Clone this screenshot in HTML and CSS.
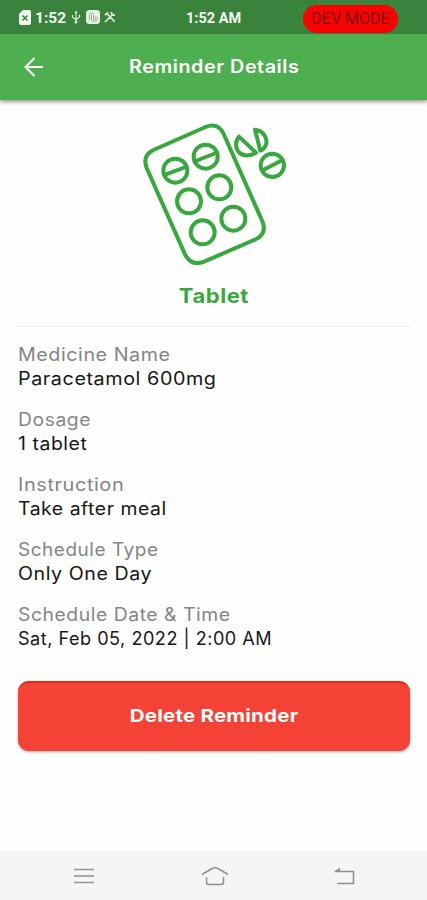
FILE: index.html
```html
<!DOCTYPE html>
<html lang="en">
<head>
<meta charset="utf-8">
<title>Reminder Details</title>
<link rel="stylesheet" href="styles.css">
</head>
<body>
<div class="screen">
  <div class="status">
    <div class="status-left">
      <svg width="12" height="15" viewBox="0 0 12 15"><path d="M4 0h6q2 0 2 2v11q0 2-2 2H2q-2 0-2-2V4z" fill="#f4fbf3"/><path d="M3.5 5.5l5 5m0-5l-5 5" stroke="#39833c" stroke-width="1.6"/></svg>
      <span class="clock">1:52</span>
      <svg class="usb" width="10" height="14" viewBox="0 0 10 14" fill="none" stroke="#d5e8d4" stroke-width="1.2"><path d="M5 2v10M1.500 5v2.500L5 9.500l3.500-2.500V4.500"/><path d="M3.300 3L5 .5 6.700 3z" fill="#d5e8d4" stroke="none"/><circle cx="5" cy="12" r="1.500" fill="#d5e8d4" stroke="none"/></svg>
      <svg class="app" width="14" height="14" viewBox="0 0 14 14"><rect width="14" height="14" rx="3.500" fill="#e8f3e7"/><path d="M3.500 10.500V5q0-2 2-2t2 2v2h2q2 0 2 2t-2 2h-4M5.500 5v5M7.500 7v3M9.500 8v2" fill="none" stroke="#8fb08f" stroke-width=".9"/></svg>
      <svg class="tools" width="12" height="12" viewBox="0 0 13 13" fill="none" stroke="#dcebdc" stroke-width="1.800"><path d="M1 12l9-9M3.500 3l8 8.500M1 4.500l3.500-3M8 1q0 4 4 3.500"/></svg>
    </div>
    <span class="time">1:52 AM</span>
    <span class="dev">DEV MODE</span>
  </div>
  <header class="appbar">
    <svg class="back" width="20" height="20" viewBox="0 0 20 20" fill="none" stroke="#fff" stroke-width="2.100"><path d="M10.500 1L1.500 10l9 9M1.500 10H19"/></svg>
    <h1 class="title">Reminder Details</h1>
  </header>
  <main class="content">
    <svg class="blister" width="170" height="160" viewBox="0 0 510 480" fill="none" stroke="#38a83e" stroke-width="12">
      <path d="M70 120L227 51Q264 36 281 72L398 336Q411 371 377 388L222 455Q185 470 166 435L50 174Q36 137 70 120Z"/>
      <circle cx="136" cy="182" r="36"/><circle cx="227" cy="140" r="36"/>
      <circle cx="177" cy="274" r="36"/><circle cx="268" cy="232" r="36"/>
      <circle cx="218" cy="367" r="36"/><circle cx="310" cy="326" r="36"/>
      <circle cx="427" cy="166" r="35"/>
      <path d="M106 194L167 171M197 153L258 129M398 181L456 151"/>
      <path d="M327 80C311 99 317 132 346 136Q362 138 378 128Z" stroke-linejoin="round"/>
      <path d="M375 59C402 61 416 89 406 108Q401 119 391 122Z" stroke-linejoin="round"/>
    </svg>
    <h2 class="kind"><span class="kind-text">Tablet</span></h2>
    <dl class="details">
      <div class="item"><dt class="l1">Medicine Name</dt><dd class="v1">Paracetamol 600mg</dd></div>
      <div class="item"><dt class="l2">Dosage</dt><dd class="v2">1 tablet</dd></div>
      <div class="item"><dt class="l3">Instruction</dt><dd class="v3">Take after meal</dd></div>
      <div class="item"><dt class="l4">Schedule Type</dt><dd class="v4">Only One Day</dd></div>
      <div class="item"><dt class="l5">Schedule Date &amp; Time</dt><dd class="v5">Sat, Feb 05, 2022 | 2:00 AM</dd></div>
    </dl>
    <button class="delete"><span class="delete-text">Delete Reminder</span></button>
  </main>
  <nav class="nav">
    <svg width="20" height="16" viewBox="0 0 20 16" fill="none" stroke="#929292" stroke-width="1.500"><path d="M0 1.500h20M0 8h20M0 14.500h20"/></svg>
    <svg width="28" height="20" viewBox="0 0 28 20" fill="none" stroke="#8f8f8f" stroke-width="1.500"><path d="M1 8.500L11 2.500Q14 1 17 2.500L27 8.500M5.500 11v5q0 2.500 2.500 2.500h12q2.500 0 2.500-2.500v-5"/></svg>
    <svg width="21" height="18" viewBox="0 0 21 18" fill="none" stroke="#8f8f8f" stroke-width="1.500"><path d="M1 4.500h18.500v12H3.500"/><path d="M0 4.800L6 .8v4z" fill="#8f8f8f" stroke="none"/></svg>
  </nav>
</div>
</body>
</html>
```
FILE: styles.css
```css
* { box-sizing: border-box; }
body { margin: 0; font-family: Inter, sans-serif; background: #fefefe; }
svg { display: block; flex: none; }
.screen { width: 427px; height: 900px; display: flex; flex-direction: column; }
.status { height: 34px; background: #39833c; display: grid; grid-template-columns: 186px 117px 95px; align-items: center; color: #f4fbf3; font-family: Roboto, sans-serif; }
.status-left { display: flex; align-items: center; padding-left: 19px; }
.clock { font-size: 15.5px; font-weight: 700; margin-left: 4px; width: 31px; padding-top: 1px; white-space: nowrap; }
.usb { margin-left: 5px; }
.app { margin: 0 4px 0 5px; }
.time { font-size: 14.5px; font-weight: 700; padding-top: 2px; white-space: nowrap; }
.dev { height: 28px; margin-top: 4px; border-radius: 14px; background: #fe0000; color: #78120c; font-size: 16px; line-height: 27px; text-align: center; white-space: nowrap; }
.appbar { position: relative; height: 66px; background: #4eaf51; display: grid; grid-template-columns: 105px 1fr; align-items: center; padding-left: 24px; box-shadow: 0 2px 4px rgba(0,0,0,.4); }
.title { justify-self: start; margin: 0; color: #fff; font-size: 18px; font-weight: 600; line-height: 24px; letter-spacing: .5px; white-space: nowrap; transform: scaleX(1.097); transform-origin: left; }
.content { flex: 1; padding: 10px 17px 0 18px; display: flex; flex-direction: column; }
.blister { margin-left: 112px; }
.kind { margin: 13px 0 0; height: 44px; border-bottom: 1px solid #ebebeb; color: #38a83e; font-size: 20px; line-height: 26px; font-weight: 700; text-align: center; letter-spacing: .5px; }
.kind-text { display: inline-block; transform: scaleX(1.1); }
.details { margin: 16px 0 0; display: grid; grid-template-rows: repeat(5, 65px); }
.item { font-size: 18px; line-height: 24px; white-space: nowrap; letter-spacing: .5px; }
dt, dd { margin: 0; width: max-content; transform-origin: left; }
dt { color: #858585; }
dd { color: #171717; }
.l1 { transform: scaleX(1.094); }
.v1 { transform: scaleX(1.1); }
.l2 { transform: scaleX(1.075); }
.v2 { transform: scaleX(1.08); }
.l3 { transform: scaleX(1.11); }
.v3 { transform: scaleX(1.077); }
.l4 { transform: scaleX(1.055); }
.v4 { transform: scaleX(1.09); }
.l5 { transform: scaleX(1.075); }
.v5 { transform: scaleX(1.005); }
.delete { margin: 13px 0 0; height: 70px; padding: 0 0 4px; border: 0; border-top: 2px solid #e12b16; border-radius: 11px; background: #f44336; color: #fff; font: 700 18px Inter, sans-serif; letter-spacing: .2px; box-shadow: 0 1px 3px rgba(0,0,0,.35); }
.delete-text { display: inline-block; transform: scaleX(1.14); }
.nav { height: 49px; background: #f5f5f5; display: grid; grid-template-columns: 127px 133px 1fr; align-items: center; padding-left: 74px; }
```
